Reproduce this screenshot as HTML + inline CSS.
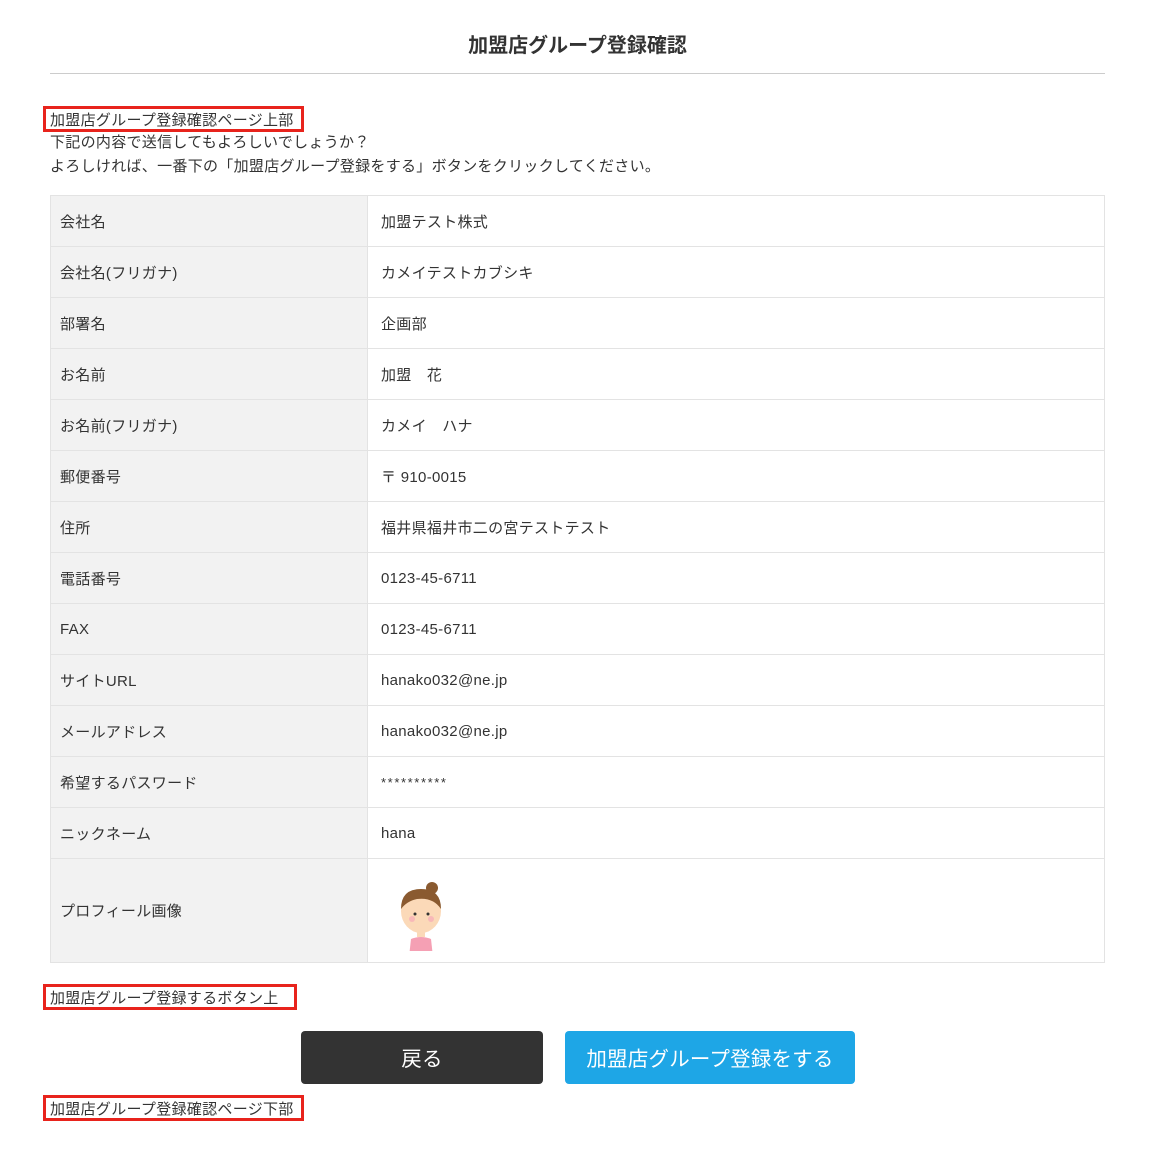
<!DOCTYPE html>
<html><head><meta charset="utf-8"><style>
*{margin:0;padding:0;box-sizing:border-box}
body{width:1153px;height:1155px;background:#fff;font-family:"Liberation Sans","Noto Sans CJK JP",sans-serif;color:#333;font-size:15px;position:relative;letter-spacing:0.3px}
h1{position:absolute;left:50px;width:1055px;top:32px;text-align:center;font-size:20px;font-weight:bold;line-height:28px;letter-spacing:0}
.hr{position:absolute;left:50px;width:1055px;top:73px;border-top:1px solid #ccc}
.box{position:absolute;left:43px;height:26px;border:3px solid #e8231c;line-height:24px;padding-left:4px;font-size:15px}
.txt{position:absolute;left:50px;top:131px;line-height:24px}
table{position:absolute;left:50px;top:195px;width:1055px;border-collapse:collapse}
td{border:1px solid #e3e3e3;height:51px;padding:0;vertical-align:middle}
td.l{width:317px;background:#f2f2f2;padding-left:9px}
td.v{padding-left:13px}
.btn{position:absolute;top:1031px;height:53px;border-radius:4px;color:#fff;font-size:20.5px;text-align:center;line-height:58px;letter-spacing:0.2px}
</style></head><body>
<h1>加盟店グループ登録確認</h1>
<div class="hr"></div>
<div class="box" style="top:106px;width:261px">加盟店グループ登録確認ページ上部</div>
<div class="txt">下記の内容で送信してもよろしいでしょうか？<br>よろしければ、一番下の「加盟店グループ登録をする」ボタンをクリックしてください。</div>
<table>
<tr><td class="l">会社名</td><td class="v">加盟テスト株式</td></tr>
<tr><td class="l">会社名(フリガナ)</td><td class="v">カメイテストカブシキ</td></tr>
<tr><td class="l">部署名</td><td class="v">企画部</td></tr>
<tr><td class="l">お名前</td><td class="v">加盟　花</td></tr>
<tr><td class="l">お名前(フリガナ)</td><td class="v">カメイ　ハナ</td></tr>
<tr><td class="l">郵便番号</td><td class="v">〒 910-0015</td></tr>
<tr><td class="l">住所</td><td class="v">福井県福井市二の宮テストテスト</td></tr>
<tr><td class="l">電話番号</td><td class="v">0123-45-6711</td></tr>
<tr><td class="l">FAX</td><td class="v">0123-45-6711</td></tr>
<tr><td class="l">サイトURL</td><td class="v">hanako032@ne.jp</td></tr>
<tr><td class="l">メールアドレス</td><td class="v">hanako032@ne.jp</td></tr>
<tr><td class="l">希望するパスワード</td><td class="v" style="font-size:13px;letter-spacing:1.6px">**********</td></tr>
<tr><td class="l">ニックネーム</td><td class="v">hana</td></tr>
<tr><td class="l" style="height:104px">プロフィール画像</td><td class="v" style="height:104px">
<svg width="60" height="80" viewBox="0 0 60 80" style="display:block;margin-left:10px">
<path d="M20 68 Q30 64 40 68 L42 86 L18 86 Z" fill="#f5a0b4"/>
<rect x="26" y="56" width="8" height="10" fill="#fbd9b8"/>
<circle cx="41" cy="17" r="6" fill="#8a5a30"/>
<ellipse cx="30" cy="40" rx="20" ry="22" fill="#fbd9b8"/>
<path d="M10 38 Q10 18 30 18 Q50 18 50 38 Q42 26 26 28 Q16 30 10 38Z" fill="#8a5a30"/>
<circle cx="24" cy="43" r="1.5" fill="#333"/><circle cx="37" cy="43" r="1.5" fill="#333"/>
<circle cx="21" cy="48" r="3" fill="#f8b8b8"/><circle cx="40" cy="48" r="3" fill="#f8b8b8"/>
</svg></td></tr>
</table>
<div class="box" style="top:984px;width:254px">加盟店グループ登録するボタン上</div>
<div class="btn" style="left:301px;width:242px;background:#333">戻る</div>
<div class="btn" style="left:565px;width:290px;background:#1ea6e6">加盟店グループ登録をする</div>
<div class="box" style="top:1095px;width:261px">加盟店グループ登録確認ページ下部</div>
</body></html>
